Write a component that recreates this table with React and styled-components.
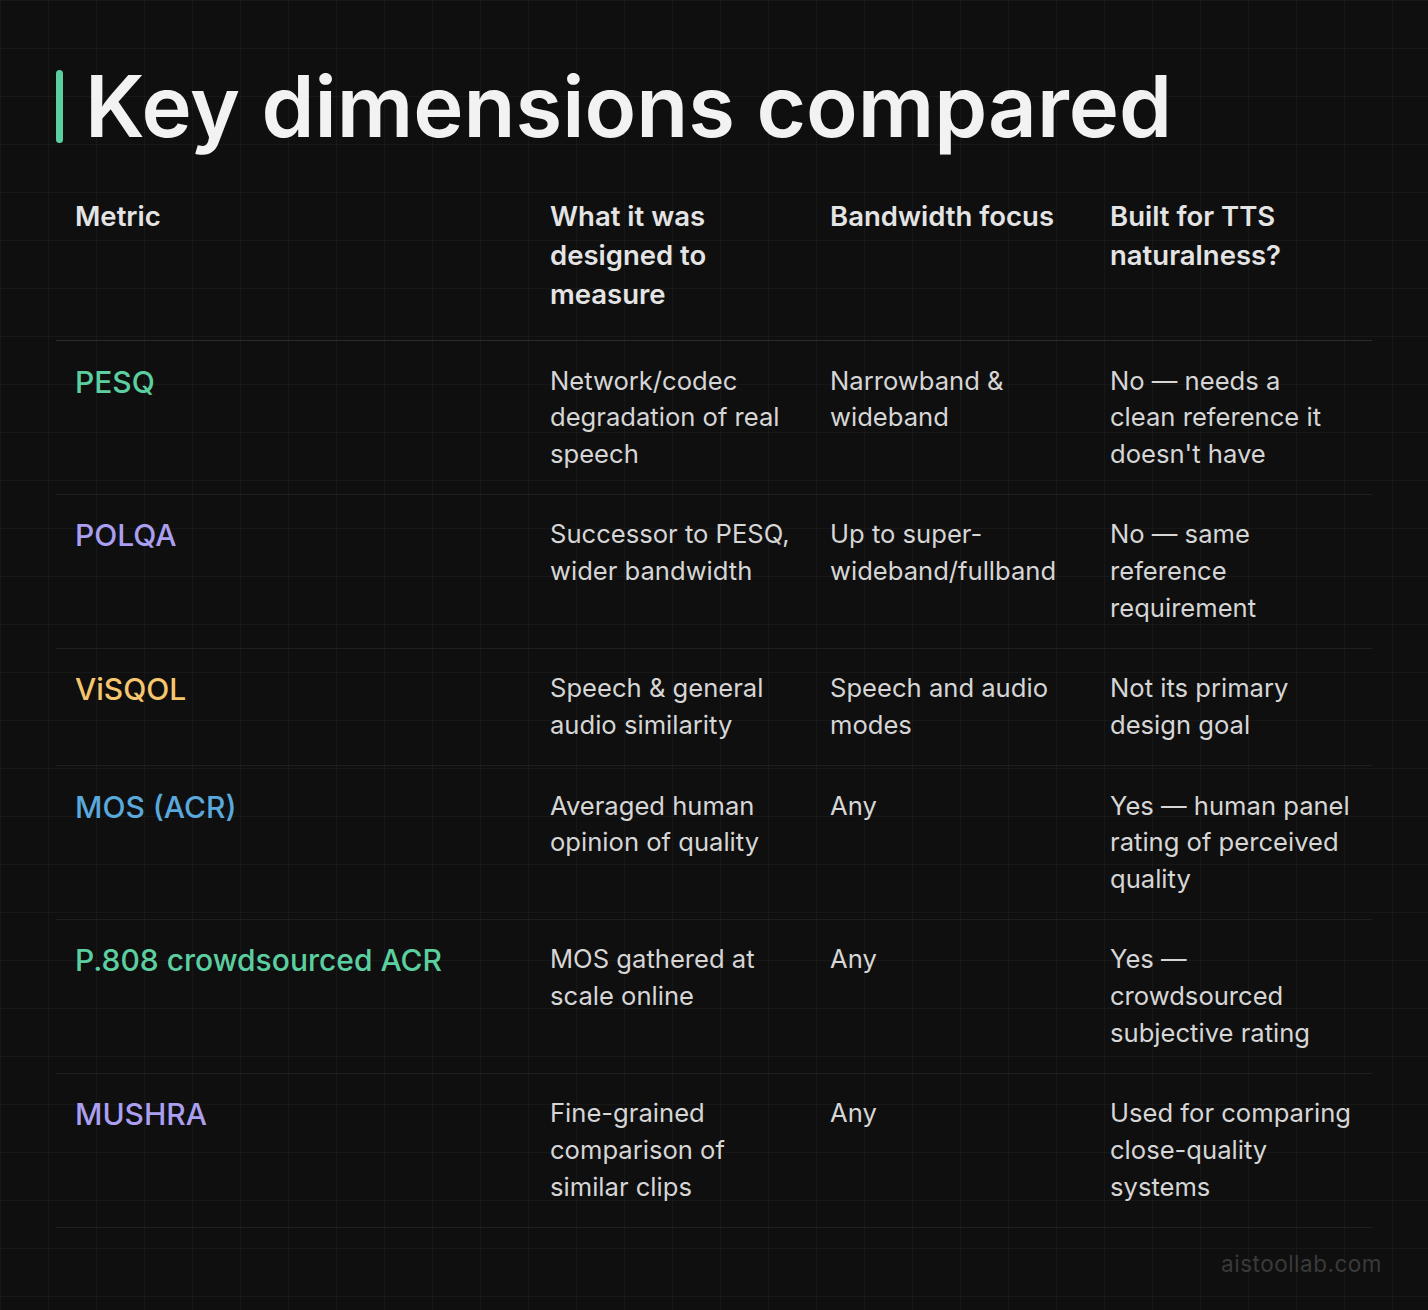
import React from "react";
import styled, { createGlobalStyle } from "styled-components";

const Global = createGlobalStyle`
  html, body { margin: 0; padding: 0; background: #0f0f0f; }
  body {
    font-family: Inter, "Noto Sans", "Noto Sans CJK SC", sans-serif;
    -webkit-font-smoothing: antialiased;
  }
`;

const Page = styled.div`
  min-height: 1310px;
  box-sizing: border-box;
  padding: 70px 46px 0 56px;
  background-color: #0f0f0f;
  background-image:
    linear-gradient(to right, rgba(255,255,255,0.035) 1px, transparent 1px),
    linear-gradient(to bottom, rgba(255,255,255,0.035) 1px, transparent 1px);
  background-size: 48px 48px;
  background-position: 0 0;
  display: flex;
  flex-direction: column;
`;

const TitleRow = styled.div`
  display: flex;
  align-items: center;
  gap: 22px;
  height: 73px;
`;

const Accent = styled.span`
  width: 7px;
  height: 73px;
  border-radius: 4px;
  background: #5ccfa1;
  flex-shrink: 0;
`;

const Title = styled.h1`
  margin: 0;
  font-size: 85px;
  line-height: 73px;
  font-weight: 600;
  color: #f2f2f2;
  letter-spacing: 0;
  white-space: nowrap;
`;

const Table = styled.div`
  margin-top: 32px;
  width: 1316px;
  display: grid;
  grid-template-columns: 475px 280px 280px 281px;
`;

const Row = styled.div`
  display: contents;
`;

const Cell = styled.div`
  padding: ${(p) => (p.$head ? "22px 8px 26px 19px" : "21.5px 8px 21.3px 19px")};
  border-bottom: 1px solid ${(p) => (p.$head ? "#2c2c2c" : "#1f1f1f")};
  font-size: ${(p) => (p.$head ? "27.5px" : "25.6px")};
  line-height: ${(p) => (p.$head ? "39px" : "36.7px")};
  font-weight: ${(p) => (p.$head ? 600 : 400)};
  color: ${(p) => (p.$head ? "#e4e4e4" : "#d6d6d6")};
  white-space: nowrap;
`;

const Line = styled.span`
  display: block;
`;

const MetricName = styled.span`
  display: block;
  font-size: 30px;
  line-height: 38px;
  font-weight: 500;
  color: ${(p) => p.$color};
`;

const Footer = styled.div`
  margin-top: 24px;
  text-align: right;
  font-size: 22.5px;
  line-height: 24px;
  color: #3a3a3a;
  letter-spacing: 0.5px;
`;

const COLORS = {
  green: "#5ccfa1",
  purple: "#aa9ff0",
  yellow: "#f6c66e",
  blue: "#5aa9dc",
};

const header = [
  ["Metric"],
  ["What it was", "designed to", "measure"],
  ["Bandwidth focus"],
  ["Built for TTS", "naturalness?"],
];

const rows = [
  {
    name: "PESQ",
    color: COLORS.green,
    what: ["Network/codec", "degradation of real", "speech"],
    band: ["Narrowband &", "wideband"],
    tts: ["No — needs a", "clean reference it", "doesn't have"],
  },
  {
    name: "POLQA",
    color: COLORS.purple,
    what: ["Successor to PESQ,", "wider bandwidth"],
    band: ["Up to super-", "wideband/fullband"],
    tts: ["No — same", "reference", "requirement"],
  },
  {
    name: "ViSQOL",
    color: COLORS.yellow,
    what: ["Speech & general", "audio similarity"],
    band: ["Speech and audio", "modes"],
    tts: ["Not its primary", "design goal"],
  },
  {
    name: "MOS (ACR)",
    color: COLORS.blue,
    what: ["Averaged human", "opinion of quality"],
    band: ["Any"],
    tts: ["Yes — human panel", "rating of perceived", "quality"],
  },
  {
    name: "P.808 crowdsourced ACR",
    color: COLORS.green,
    what: ["MOS gathered at", "scale online"],
    band: ["Any"],
    tts: ["Yes —", "crowdsourced", "subjective rating"],
  },
  {
    name: "MUSHRA",
    color: COLORS.purple,
    what: ["Fine-grained", "comparison of", "similar clips"],
    band: ["Any"],
    tts: ["Used for comparing", "close-quality", "systems"],
  },
];

const Lines = ({ lines }) => lines.map((l) => <Line key={l}>{l}</Line>);

export default function App() {
  return (
    <>
      <Global />
      <Page>
        <TitleRow>
          <Accent />
          <Title>Key dimensions compared</Title>
        </TitleRow>
        <Table>
          <Row>
            {header.map((h) => (
              <Cell $head key={h[0]}>
                <Lines lines={h} />
              </Cell>
            ))}
          </Row>
          {rows.map((r) => (
            <Row key={r.name}>
              <Cell>
                <MetricName $color={r.color}>{r.name}</MetricName>
              </Cell>
              <Cell>
                <Lines lines={r.what} />
              </Cell>
              <Cell>
                <Lines lines={r.band} />
              </Cell>
              <Cell>
                <Lines lines={r.tts} />
              </Cell>
            </Row>
          ))}
        </Table>
        <Footer>aistoollab.com</Footer>
      </Page>
    </>
  );
}
